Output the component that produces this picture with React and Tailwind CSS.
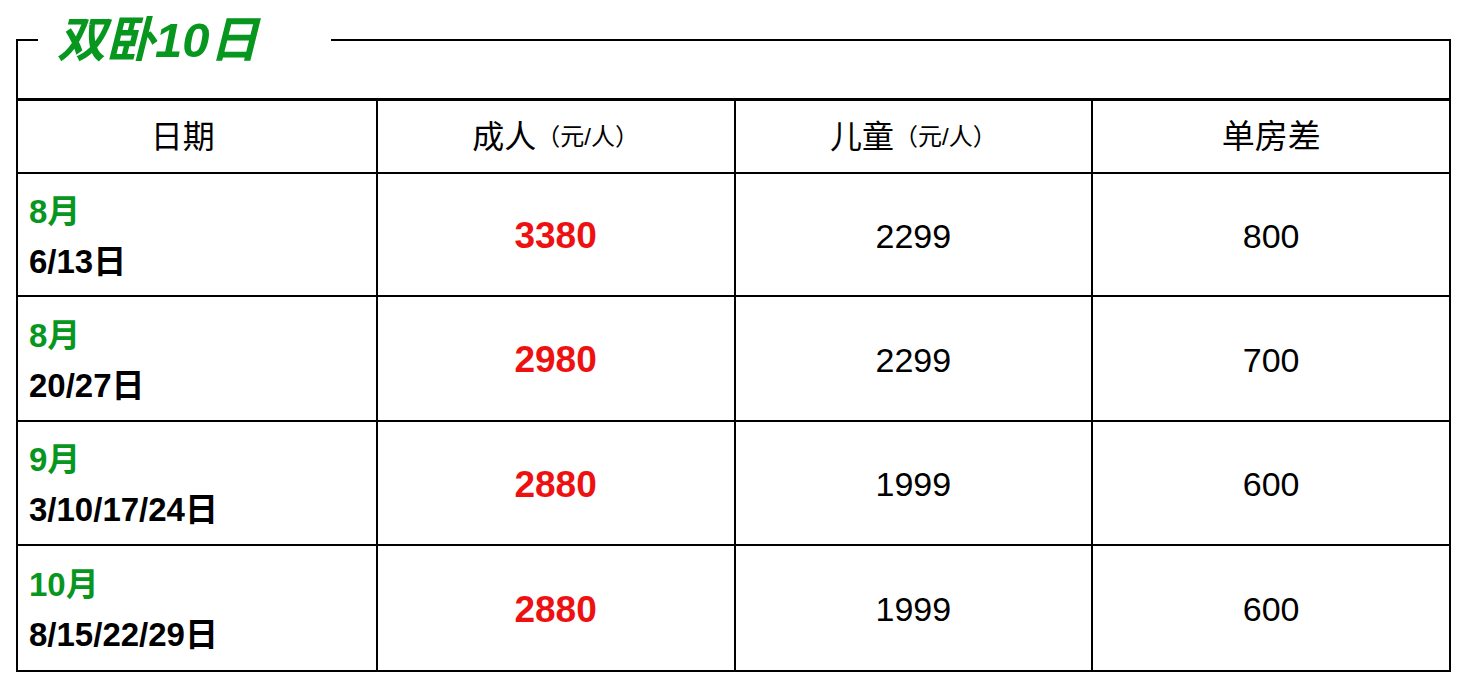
import React from "react";

const rows = [
  { m: "8月", d: "6/13日", a: "3380", c: "2299", s: "800", h: "h-[123px]" },
  { m: "8月", d: "20/27日", a: "2980", c: "2299", s: "700", h: "h-[125px]" },
  { m: "9月", d: "3/10/17/24日", a: "2880", c: "1999", s: "600", h: "h-[124px]" },
  { m: "10月", d: "8/15/22/29日", a: "2880", c: "1999", s: "600", h: "h-[124px]" },
];

const font = { fontFamily: '"Liberation Sans", "Noto Sans CJK SC", Arial, sans-serif' };

export default function App() {
  return (
    <div className="w-[1464px] h-[680px] bg-white pt-[39px] pl-[16px]" style={font}>
      <div className="relative w-[1435px] border-2 border-black">
        <div className="absolute left-[20px] -top-[31px] w-[293px] h-[60px] bg-white flex items-center pl-[19px]">
          <span className="text-[49px] leading-none font-bold italic text-[#07961e]">双卧10日</span>
        </div>
        <div className="h-[57px]" />
        <div className="border-t-[3px] border-black">
          <div className="grid grid-cols-4 h-[73px] border-b-2 border-black text-black">
            <div className="flex items-center justify-center pr-[28px] text-[32px]">日期</div>
            <div className="flex items-center justify-center border-l-2 border-black">
              <span className="text-[32px]">成人</span>
              <span className="text-[24px]">（元/人）</span>
            </div>
            <div className="flex items-center justify-center border-l-2 border-black">
              <span className="text-[32px]">儿童</span>
              <span className="text-[24px]">（元/人）</span>
            </div>
            <div className="flex items-center justify-center border-l-2 border-black text-[33px]">单房差</div>
          </div>
          {rows.map((r, i) => (
            <div
              key={i}
              className={`grid grid-cols-4 ${r.h} ${i < rows.length - 1 ? "border-b-2 border-black" : ""}`}
            >
              <div className="flex flex-col justify-center pl-[11px] pt-[4px] font-bold text-[33px] leading-[50px]">
                <div className="text-[#07961e]">{r.m}</div>
                <div className="text-black">{r.d}</div>
              </div>
              <div className="flex items-center justify-center pt-[3px] border-l-2 border-black text-[37px] font-bold text-[#ee1111]">
                {r.a}
              </div>
              <div className="flex items-center justify-center pt-[3px] border-l-2 border-black text-[34px] text-black">
                {r.c}
              </div>
              <div className="flex items-center justify-center pt-[3px] border-l-2 border-black text-[34px] text-black">
                {r.s}
              </div>
            </div>
          ))}
        </div>
      </div>
    </div>
  );
}
